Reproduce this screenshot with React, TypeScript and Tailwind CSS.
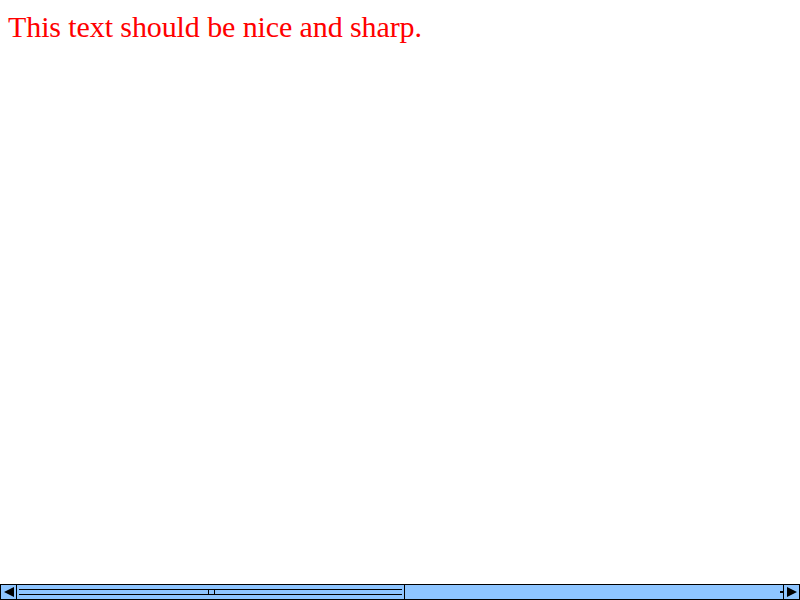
const App = () => {
  return (
    <div className="w-[800px] h-[600px] bg-white flex flex-col overflow-hidden">
      <div className="flex-1 px-2 pt-[7px]">
        <p className="text-[30px] leading-[40px] tracking-[-0.1px] text-[#ff0000] font-['Liberation_Serif',serif]">
          This text should be nice and sharp.
        </p>
      </div>

      {/* scrollbar */}
      <div className="h-[16px] flex bg-[#8ec5ff] border border-black">
        <div className="w-[16px] flex items-center justify-center border-r border-black">
          <svg width="12" height="10" viewBox="0 0 12 10">
            <polygon points="1,5 11,0 11,10" fill="black" />
          </svg>
        </div>
        <div className="w-[388px] flex flex-col justify-center border-r border-black relative">
          <div className="h-[6px] border-y border-black mx-[2px]" />
          <div className="absolute left-[191px] top-[4px] flex gap-[5px]">
            <div className="w-px h-[5px] bg-black" />
            <div className="w-px h-[5px] bg-black" />
          </div>
        </div>
        <div className="flex-1" />
        <div className="w-[16px] flex items-center justify-center border-l border-black relative">
          <div className="absolute -left-[4px] top-[6px] w-[3px] h-[2px] bg-black" />
          <svg width="12" height="10" viewBox="0 0 12 10">
            <polygon points="11,5 1,0 1,10" fill="black" />
          </svg>
        </div>
      </div>
    </div>
  );
};

export default App;
